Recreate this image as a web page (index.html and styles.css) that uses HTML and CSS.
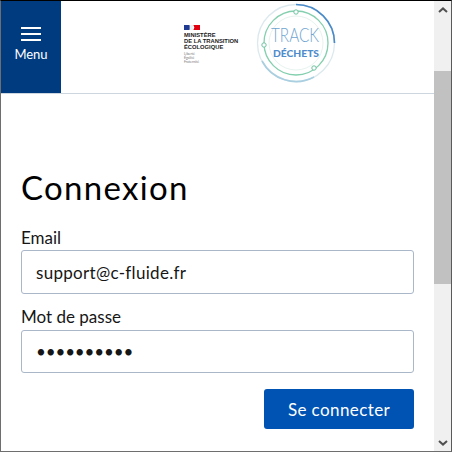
FILE: index.html
```html
<!DOCTYPE html>
<html lang="fr">
<head>
    <meta charset="UTF-8">
    <meta name="viewport" content="width=device-width, initial-scale=1.0">
    <title>Connexion</title>
    <link rel="stylesheet" href="styles.css">
</head>
<body>
    <div class="window">
        <div class="page">
            <header class="header">
                <button class="menu-btn" type="button">
                    <span class="burger"><i></i><i></i><i></i></span>
                    <span>Menu</span>
                </button>
                <div class="logos">
                    <div class="ministere">
                        <svg class="flag" width="16" height="5" viewBox="0 0 17 6" preserveAspectRatio="none">
                            <path d="M0 0h6l1 3-1 3H0z" fill="#1f3a93"/>
                            <path d="M6 0h4l-1 3 1 3H6z" fill="#eee"/>
                            <path d="M10 0h7v6h-7l1-3z" fill="#e1000f"/>
                        </svg>
                        <div class="min-name">MINISTÈRE<br>DE LA TRANSITION<br>ÉCOLOGIQUE</div>
                        <div class="min-motto">Liberté<br>Égalité<br>Fraternité</div>
                    </div>
                    <svg class="track" width="84" height="84" viewBox="0 0 84 84">
                        <circle cx="42" cy="42" r="38.5" fill="none" stroke="#dbe9ee" stroke-width="1.3"/>
                        <path d="M42 3.5A38.5 38.5 0 0 1 80.5 42" fill="none" stroke="#4a8ac9" stroke-width="1.7"/>
                        <path d="M8 60A38.5 38.5 0 0 0 60 76" fill="none" stroke="#a9cfe0" stroke-width="1.7"/>
                        <circle cx="42" cy="42" r="32" fill="none" stroke="#83cfae" stroke-width="1.3"/>
                        <circle cx="42" cy="42" r="27" fill="none" stroke="#e6f3ee" stroke-width="1"/>
                        <circle cx="42" cy="11" r="2.2" fill="#fff" stroke="#6fc2a0"/>
                        <circle cx="10" cy="44" r="2.2" fill="#fff" stroke="#6fc2a0"/>
                        <circle cx="60" cy="67" r="2.2" fill="#fff" stroke="#6fc2a0"/>
                        <text class="track-word" x="41" y="41" text-anchor="middle" textLength="48" lengthAdjust="spacingAndGlyphs">TRACK</text>
                        <text class="dechets-word" x="42" y="56" text-anchor="middle" textLength="46" lengthAdjust="spacingAndGlyphs">DÉCHETS</text>
                    </svg>
                </div>
            </header>

            <form class="form">
                <h1 class="title">Connexion</h1>
                <label class="label" for="email">Email</label>
                <input class="input" type="text" id="email" value="support@c-fluide.fr">
                <label class="label label-pass" for="pass">Mot de passe</label>
                <input class="input input-pass" type="password" id="pass" value="aaaaaaaaaa">
                <div class="actions">
                    <button class="submit" type="button">Se connecter</button>
                </div>
            </form>
        </div>

        <div class="scrollbar">
            <div class="arrow">
                <svg width="10" height="6" viewBox="0 0 10 6"><path d="M1 5l4-3.6L9 5" fill="none" stroke="#505050" stroke-width="2"/></svg>
            </div>
            <div class="gap-top"></div>
            <div class="thumb"></div>
            <div class="gap-bottom"></div>
            <div class="arrow">
                <svg width="10" height="6" viewBox="0 0 10 6"><path d="M1 1l4 3.6L9 1" fill="none" stroke="#505050" stroke-width="2"/></svg>
            </div>
        </div>
    </div>
</body>
</html>
```

FILE: styles.css
```css
*{
    margin: 0;
    padding: 0;
    box-sizing: border-box;
}

html, body{
    width: 452px;
    height: 452px;
    overflow: hidden;
}

body{
    background-color: #fff;
    font-family: "Lato", "Open Sans", sans-serif;
    color: #161616;
}

.window{
    display: flex;
    width: 452px;
    height: 452px;
    border-top: 1px solid #000;
    border-left: 1px solid #6e6e6e;
    border-right: 1px solid #5a5a5a;
    border-bottom: 1px solid #6e6e6e;
}

.page{
    flex: 1;
    min-width: 0;
}

.header{
    display: flex;
    height: 93px;
    border-bottom: 1px solid #cdd5de;
}

.menu-btn{
    display: flex;
    flex-direction: column;
    align-items: center;
    width: 60px;
    padding-top: 26px;
    border: none;
    background-color: #003b80;
    color: #fff;
    font-family: inherit;
    font-size: 13px;
}

.burger{
    display: flex;
    flex-direction: column;
    gap: 4px;
    width: 20px;
    margin-bottom: 5px;
}

.burger i{
    display: block;
    height: 2px;
    background-color: #fff;
}

.logos{
    display: flex;
    align-items: flex-start;
    margin-left: 123px;
}

.ministere{
    width: 70px;
    padding-top: 24px;
}

.flag{
    display: block;
    margin-bottom: 2px;
}

.min-name{
    font-family: "Liberation Sans", sans-serif;
    font-size: 5.8px;
    font-weight: bold;
    line-height: 6px;
    color: #222;
    white-space: nowrap;
}

.min-motto{
    margin-top: 2px;
    font-size: 3.5px;
    line-height: 4px;
    color: #777;
}

.track-word{
    font-family: "Lato", sans-serif;
    font-size: 19px;
    font-weight: 300;
    fill: #6fa4cf;
}

.dechets-word{
    font-family: "Lato", sans-serif;
    font-size: 10px;
    font-weight: 900;
    fill: #4f8ccc;
}

.form{
    display: flex;
    flex-direction: column;
    padding: 73px 20px 0 20px;
}

.title{
    font-size: 33px;
    font-weight: 400;
    line-height: 40px;
    letter-spacing: 1.3px;
    color: #000;
    margin-bottom: 21px;
}

.label{
    font-size: 17px;
    line-height: 20px;
    margin-bottom: 2px;
}

.label-pass{
    margin-top: 13px;
    margin-bottom: 3px;
}

.input{
    width: 393px;
    height: 44px;
    padding: 0 14px;
    border: 1px solid #a9b7c9;
    border-radius: 3px;
    background-color: #fff;
    font-family: inherit;
    font-size: 17px;
    letter-spacing: 0.3px;
    color: #161616;
}

.input-pass{
    height: 43px;
    letter-spacing: -0.15px;
}

.actions{
    display: flex;
    justify-content: flex-end;
    width: 393px;
    margin-top: 16px;
}

.submit{
    width: 150px;
    height: 40px;
    border: none;
    border-radius: 3px;
    background-color: #0053b3;
    color: #fff;
    font-family: inherit;
    font-size: 17px;
    letter-spacing: 0.4px;
}

.scrollbar{
    display: flex;
    flex-direction: column;
    flex: none;
    width: 17px;
    background-color: #f0f0f0;
}

.arrow{
    display: flex;
    align-items: center;
    justify-content: center;
    flex: none;
    height: 17px;
}

.gap-top{
    height: 53px;
}

.thumb{
    height: 213px;
    background-color: #c1c1c1;
}

.gap-bottom{
    flex: 1;
}
```
